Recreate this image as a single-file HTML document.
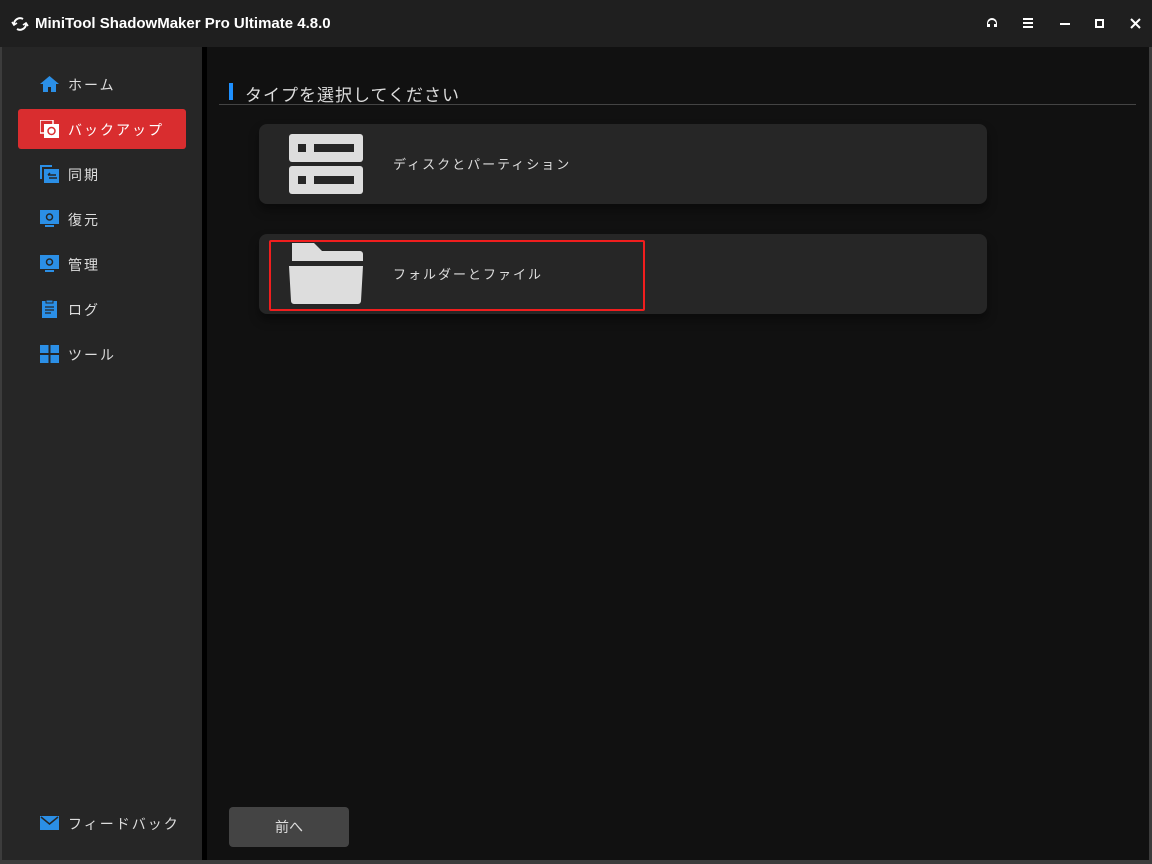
<!DOCTYPE html>
<html><head><meta charset="utf-8"><style>
*{margin:0;padding:0;box-sizing:border-box}
body{width:1152px;height:864px;background:#111;font-family:"Liberation Sans","Noto Sans CJK JP",sans-serif;position:relative;overflow:hidden;color:#ddd}
.title{position:absolute;left:0;top:0;width:1152px;height:47px;background:#1f1f1f}
.title .t{position:absolute;left:35px;top:15px;font-size:15px;font-weight:bold;color:#fff}
.side{position:absolute;left:0;top:47px;width:202px;height:813px;background:#262626;border-left:2px solid #3c3c3c}
.div{position:absolute;left:202px;top:47px;width:5px;height:813px;background:#000}
.bottom{position:absolute;left:0;top:860px;width:1152px;height:4px;background:#3c3c3c}
.right{position:absolute;left:1149px;top:47px;width:3px;height:817px;background:#3c3c3c}
.item{position:absolute;left:18px;width:168px;height:40px;font-size:14px;color:#ddd;letter-spacing:2px}
.item .ic{position:absolute;left:22px;top:11px;width:19px;height:18px}
.item span{position:absolute;left:50px;top:11px}
.act{background:#d92d2f;border-radius:3px;color:#fff}
.hdr{position:absolute;left:245px;top:81px;font-size:17px;color:#ddd;letter-spacing:1px}
.bar{position:absolute;left:229px;top:83px;width:4px;height:17px;background:#1e90ff}
.line{position:absolute;left:219px;top:104px;width:917px;height:1px;background:#444}
.card{position:absolute;left:259px;width:728px;height:80px;background:#262626;border-radius:8px;box-shadow:0 6px 10px rgba(0,0,0,.4)}
.card span{position:absolute;left:134px;top:30px;font-size:13px;letter-spacing:2px;color:#ddd}
.red{position:absolute;left:269px;top:240px;width:376px;height:71px;border:2px solid #f01e1e;border-radius:2px}
.btn{position:absolute;left:229px;top:807px;width:120px;height:40px;background:#444;border-radius:4px;text-align:center;line-height:40px;font-size:14px;color:#ddd}
</style></head><body>
<div class="title">
<svg style="position:absolute;left:11px;top:15px" width="18" height="18" viewBox="0 0 18 18" fill="none" stroke="#fff" stroke-width="2"><path d="M3 9a6 6 0 0 1 9-5M15 9a6 6 0 0 1-9 5"/><path d="M1 7l2 3 3-2M17 11l-2-3-3 2" stroke-width="1.6"/></svg>
<div class="t">MiniTool ShadowMaker Pro Ultimate 4.8.0</div>
<svg style="position:absolute;left:986px;top:17px" width="12" height="12" viewBox="0 0 12 12"><path d="M1 10V6a5 5 0 0 1 10 0v4H8V7h2a4 4 0 0 0-8 0h2v3z" fill="#fff"/></svg>
<svg style="position:absolute;left:1023px;top:18px" width="10" height="10"><rect y="0" width="10" height="2" fill="#fff"/><rect y="4" width="10" height="2" fill="#fff"/><rect y="8" width="10" height="2" fill="#fff"/></svg>
<div style="position:absolute;left:1060px;top:23px;width:10px;height:2px;background:#fff"></div>
<div style="position:absolute;left:1095px;top:19px;width:9px;height:9px;border:2px solid #fff"></div>
<svg style="position:absolute;left:1130px;top:18px" width="11" height="11"><path d="M1 1l9 9M10 1l-9 9" stroke="#fff" stroke-width="2"/></svg>
</div>
<div class="side"></div><div class="div"></div><div class="right"></div><div class="bottom"></div>

<div class="item" style="top:64px"><svg class="ic" viewBox="0 0 19 18"><path d="M9.5 1L0 9h3v8h5v-5h3v5h5V9h3z" fill="#2b8fe6"/></svg><span>ホーム</span></div>
<div class="item act" style="top:109px"><svg class="ic" viewBox="0 0 19 18"><rect x="0" y="0" width="13" height="13" fill="none" stroke="#fff" stroke-width="1.5"/><rect x="4" y="4" width="15" height="14" fill="#fff"/><circle cx="11.5" cy="11" r="3.5" fill="none" stroke="#d92d2f" stroke-width="1.5"/></svg><span>バックアップ</span></div>
<div class="item" style="top:154px"><svg class="ic" viewBox="0 0 19 18"><path d="M0 0h12v2H2v12H0z" fill="#2b8fe6"/><rect x="4" y="4" width="15" height="14" fill="#2b8fe6"/><path d="M8 10h8M10 8l-2 2M9 13h8" stroke="#262626" stroke-width="1.5"/></svg><span>同期</span></div>
<div class="item" style="top:199px"><svg class="ic" viewBox="0 0 19 18"><rect x="0" y="0" width="19" height="14" fill="#2b8fe6"/><rect x="5" y="15" width="9" height="2" fill="#2b8fe6"/><circle cx="9.5" cy="7" r="3" fill="none" stroke="#262626" stroke-width="1.5"/></svg><span>復元</span></div>
<div class="item" style="top:244px"><svg class="ic" viewBox="0 0 19 18"><rect x="0" y="0" width="19" height="14" fill="#2b8fe6"/><rect x="5" y="15" width="9" height="2" fill="#2b8fe6"/><circle cx="9.5" cy="7" r="3" fill="none" stroke="#262626" stroke-width="1.5"/></svg><span>管理</span></div>
<div class="item" style="top:289px"><svg class="ic" viewBox="0 0 19 18"><rect x="2" y="1" width="15" height="17" fill="#2b8fe6"/><path d="M5 7h9M5 10h9M5 13h6" stroke="#262626" stroke-width="1.3"/><rect x="6" y="0" width="7" height="3" fill="#2b8fe6" stroke="#262626"/></svg><span>ログ</span></div>
<div class="item" style="top:334px"><svg class="ic" viewBox="0 0 19 18"><rect x="0" y="0" width="8.5" height="8" fill="#2b8fe6"/><rect x="10.5" y="0" width="8.5" height="8" fill="#2b8fe6"/><rect x="0" y="10" width="8.5" height="8" fill="#2b8fe6"/><rect x="10.5" y="10" width="8.5" height="8" fill="#2b8fe6"/></svg><span>ツール</span></div>
<div class="item" style="top:803px"><svg class="ic" viewBox="0 0 19 18"><rect x="0" y="2" width="19" height="14" fill="#2b8fe6"/><path d="M1 3l8.5 7L18 3" fill="none" stroke="#262626" stroke-width="1.5"/></svg><span>フィードバック</span></div>

<div class="bar"></div><div class="hdr">タイプを選択してください</div><div class="line"></div>

<div class="card" style="top:124px">
<svg style="position:absolute;left:30px;top:10px" width="74" height="60" viewBox="0 0 74 60"><rect x="0" y="0" width="74" height="28" rx="3" fill="#ddd"/><rect x="0" y="32" width="74" height="28" rx="3" fill="#ddd"/><rect x="9" y="10" width="8" height="8" fill="#262626"/><rect x="25" y="10" width="40" height="8" fill="#262626"/><rect x="9" y="42" width="8" height="8" fill="#262626"/><rect x="25" y="42" width="40" height="8" fill="#262626"/></svg>
<span>ディスクとパーティション</span></div>
<div class="card" style="top:234px">
<svg style="position:absolute;left:30px;top:9px" width="74" height="61" viewBox="0 0 74 61"><path d="M3 0h22l8 8h38a3 3 0 0 1 3 3v7H3z" fill="#ddd"/><path d="M0 23h74l-2 35a3 3 0 0 1-3 3H5a3 3 0 0 1-3-3z" fill="#ddd"/></svg>
<span>フォルダーとファイル</span></div>
<div class="red"></div>
<div class="btn">前へ</div>
</body></html>
